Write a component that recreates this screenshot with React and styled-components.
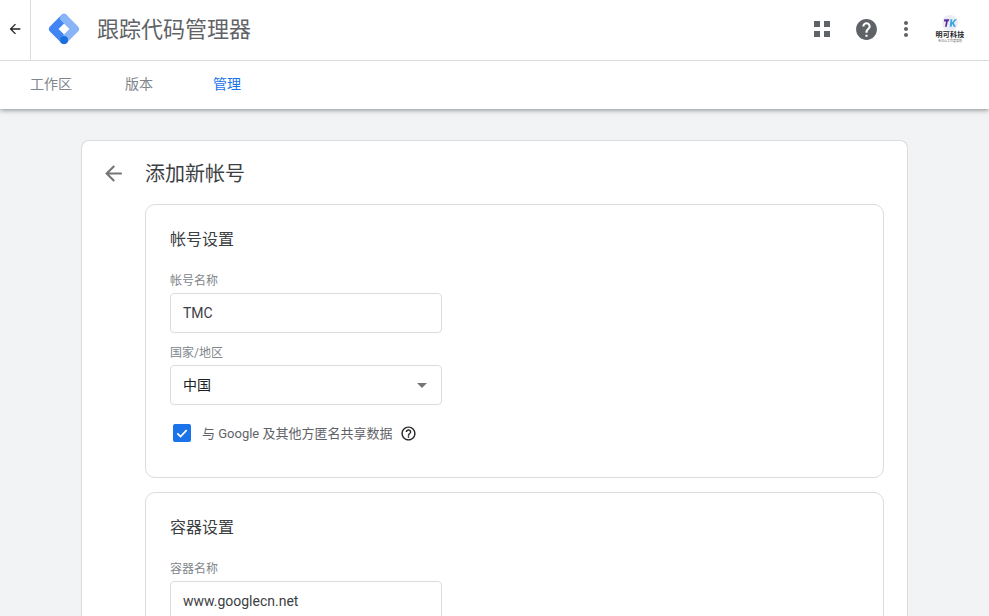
import React from 'react';
import styled, { createGlobalStyle } from 'styled-components';

const GlobalStyle = createGlobalStyle`
  html, body {
    margin: 0;
    padding: 0;
    height: 616px;
    overflow: hidden;
    background: #f1f3f4;
    font-family: Roboto, "Noto Sans CJK SC", sans-serif;
  }
  * {
    box-sizing: border-box;
  }
`;

const Page = styled.div`
  height: 616px;
  overflow: hidden;
  display: flex;
  flex-direction: column;
`;

const Header = styled.header`
  flex-shrink: 0;
  background: #fff;
  box-shadow: 0 1px 5px rgba(60, 64, 67, 0.6);
`;

const TopBar = styled.div`
  display: flex;
  align-items: center;
  height: 61px;
  border-bottom: 1px solid #dadce0;
`;

const BackCell = styled.div`
  width: 31px;
  height: 60px;
  padding-bottom: 2px;
  display: flex;
  align-items: center;
  justify-content: center;
  border-right: 1px solid #dadce0;
  color: #202124;
`;

const Logo = styled.svg`
  width: 32px;
  height: 32px;
  margin: 0 0 2px 17px;
  flex-shrink: 0;
`;

const ProductName = styled.div`
  margin-left: 17px;
  font-size: 22px;
  line-height: 60px;
  color: #5f6368;
`;

const Actions = styled.div`
  margin-left: auto;
  display: flex;
  align-items: center;
  height: 60px;
  padding-bottom: 2px;
  color: #5f6368;
`;

const ActionIcon = styled.svg`
  width: ${({ size }) => size}px;
  height: ${({ size }) => size}px;
  margin-left: ${({ gap }) => gap}px;
  fill: currentColor;
  display: block;
`;

const Brand = styled.div`
  width: 30px;
  margin: 0 24px 0 17px;
  display: flex;
  flex-direction: column;
  align-items: center;
`;

const BrandMark = styled.svg`
  width: 16px;
  height: 16px;
  display: block;
`;

const BrandName = styled.div`
  font-size: 7px;
  line-height: 8px;
  font-weight: 700;
  letter-spacing: 0.2px;
  color: #202124;
  white-space: nowrap;
`;

const BrandSlogan = styled.div`
  font-size: 3px;
  line-height: 4px;
  color: #5f6368;
  white-space: nowrap;
`;

const Tabs = styled.nav`
  display: flex;
  height: 48px;
  padding-left: 30px;
`;

const Tab = styled.div`
  width: ${({ width }) => width}px;
  font-size: 14px;
  line-height: 47px;
  color: ${({ active }) => (active ? '#1a73e8' : '#80868b')};
`;

const Content = styled.main`
  flex: 1;
  min-height: 0;
  padding: 31px 81px 0 81px;
`;

const OuterCard = styled.section`
  background: #fff;
  border: 1px solid #dadce0;
  border-bottom: 0;
  border-radius: 8px 8px 0 0;
  padding: 0 23px 0 63px;
  height: 520px;
`;

const PageTitle = styled.div`
  position: relative;
  height: 63px;
  font-size: 20px;
  line-height: 67px;
  color: #3c4043;
`;

const TitleBack = styled.svg`
  position: absolute;
  left: -44px;
  top: 20px;
  width: 25px;
  height: 25px;
  fill: #757575;
`;

const Panel = styled.div`
  background: #fff;
  border: 1px solid #dadce0;
  border-radius: 10px;
  padding: 24px 24px 0;
  height: ${({ height }) => height}px;
  margin-bottom: 14px;
`;

const PanelTitle = styled.div`
  font-size: 16px;
  line-height: 22px;
  color: #3c4043;
  margin-bottom: 22px;
`;

const FieldLabel = styled.div`
  font-size: 12px;
  line-height: 16px;
  height: 20px;
  color: #80868b;
`;

const Field = styled.div`
  width: 272px;
  height: 40px;
  border: 1px solid #dadce0;
  border-radius: 4px;
  padding: 0 12px;
  display: flex;
  align-items: center;
  justify-content: space-between;
  font-size: 14px;
  color: #3c4043;
  margin-bottom: ${({ last }) => (last ? 0 : 12)}px;
`;

const SelectValue = styled.span`
  margin-bottom: 3px;
  color: #202124;
`;

const Caret = styled.span`
  width: 0;
  height: 0;
  margin-right: 2px;
  border-left: 5px solid transparent;
  border-right: 5px solid transparent;
  border-top: 5px solid #757575;
`;

const ShareRow = styled.div`
  display: flex;
  align-items: center;
  margin: 18px 0 0 3px;
`;

const Checkbox = styled.span`
  width: 18px;
  height: 18px;
  border-radius: 2px;
  background: #1a73e8;
  display: flex;
  align-items: center;
  justify-content: center;
`;

const ShareText = styled.span`
  margin-left: 11px;
  font-size: 13px;
  color: #5f6368;
`;

const HelpOutline = styled.svg`
  width: 17px;
  height: 17px;
  margin: 2px 0 0 7px;
  fill: #202124;
`;

export default function App() {
  return (
    <Page>
      <GlobalStyle />
      <Header>
        <TopBar>
          <BackCell>
            <svg width="16" height="16" viewBox="0 0 24 24" fill="currentColor">
              <path d="M20 11H7.83l5.59-5.59L12 4l-8 8 8 8 1.41-1.41L7.83 13H20v-2z" />
            </svg>
          </BackCell>
          <Logo viewBox="0 0 32 32" fill="none">
            <path d="M16 5L5 16L16 27" stroke="#4285f4" strokeWidth="8" strokeLinecap="round" strokeLinejoin="round" />
            <path d="M16 5L27 16L16 27" stroke="#8ab4f8" strokeWidth="8" strokeLinecap="round" strokeLinejoin="round" />
            <circle cx="16" cy="27" r="4" fill="#1a6fdc" />
          </Logo>
          <ProductName>跟踪代码管理器</ProductName>
          <Actions>
            <ActionIcon size={16} gap={0} viewBox="0 0 16 16">
              <path d="M0 0h6v6H0zM10 0h6v6h-6zM0 10h6v6H0zM10 10h6v6h-6z" />
            </ActionIcon>
            <ActionIcon size={25} gap={24} viewBox="0 0 24 24">
              <path d="M12 2C6.48 2 2 6.48 2 12s4.48 10 10 10 10-4.48 10-10S17.52 2 12 2zm1 17h-2v-2h2v2zm2.07-7.75l-.9.92C13.45 12.9 13 13.5 13 15h-2v-.5c0-1.1.45-2.1 1.17-2.83l1.24-1.26c.37-.36.59-.86.59-1.41 0-1.1-.9-2-2-2s-2 .9-2 2H8c0-2.21 1.79-4 4-4s4 1.79 4 4c0 .88-.36 1.68-.93 2.25z" />
            </ActionIcon>
            <ActionIcon size={24} gap={15} viewBox="0 0 24 24">
              <path d="M12 8c1.1 0 2-.9 2-2s-.9-2-2-2-2 .9-2 2 .9 2 2 2zm0 2c-1.1 0-2 .9-2 2s.9 2 2 2 2-.9 2-2-.9-2-2-2zm0 6c-1.1 0-2 .9-2 2s.9 2 2 2 2-.9 2-2-.9-2-2-2z" />
            </ActionIcon>
            <Brand>
              <BrandMark viewBox="0 0 15 15">
                <circle cx="7.5" cy="7.5" r="7.5" fill="#ececf4" />
                <path d="M2 4h5L6 6H5.4L4.4 11H2.8L3.8 6H2z" fill="#5b2d9e" />
                <path d="M8 4h1.7L9.2 7 12 4h2L11 7.2 13 11h-2L9.6 8.3 9 11H7.2z" fill="#38a8e0" />
              </BrandMark>
              <BrandName>明可科技</BrandName>
              <BrandSlogan>专注让工作更高效</BrandSlogan>
            </Brand>
          </Actions>
        </TopBar>
        <Tabs>
          <Tab width={95}>工作区</Tab>
          <Tab width={88}>版本</Tab>
          <Tab active>管理</Tab>
        </Tabs>
      </Header>
      <Content>
        <OuterCard>
          <PageTitle>
            <TitleBack viewBox="0 0 24 24">
              <path d="M20 11H7.83l5.59-5.59L12 4l-8 8 8 8 1.41-1.41L7.83 13H20v-2z" />
            </TitleBack>
            添加新帐号
          </PageTitle>
          <Panel height={274}>
            <PanelTitle>帐号设置</PanelTitle>
            <FieldLabel>帐号名称</FieldLabel>
            <Field>TMC</Field>
            <FieldLabel>国家/地区</FieldLabel>
            <Field last>
              <SelectValue>中国</SelectValue>
              <Caret />
            </Field>
            <ShareRow>
              <Checkbox>
                <svg width="14" height="14" viewBox="0 0 24 24" fill="none" stroke="#fff" strokeWidth="3">
                  <path d="M4 12.5l5.5 5.5L20 7" />
                </svg>
              </Checkbox>
              <ShareText>与 Google 及其他方匿名共享数据</ShareText>
              <HelpOutline viewBox="0 0 24 24">
                <path d="M11 18h2v-2h-2v2zm1-16C6.48 2 2 6.48 2 12s4.48 10 10 10 10-4.48 10-10S17.52 2 12 2zm0 18c-4.41 0-8-3.59-8-8s3.59-8 8-8 8 3.59 8 8-3.59 8-8 8zm0-14c-2.21 0-4 1.79-4 4h2c0-1.1.9-2 2-2s2 .9 2 2c0 2-3 1.75-3 5h2c0-2.25 3-2.5 3-5 0-2.21-1.79-4-4-4z" />
              </HelpOutline>
            </ShareRow>
          </Panel>
          <Panel height={200}>
            <PanelTitle>容器设置</PanelTitle>
            <FieldLabel>容器名称</FieldLabel>
            <Field>www.googlecn.net</Field>
          </Panel>
        </OuterCard>
      </Content>
    </Page>
  );
}
